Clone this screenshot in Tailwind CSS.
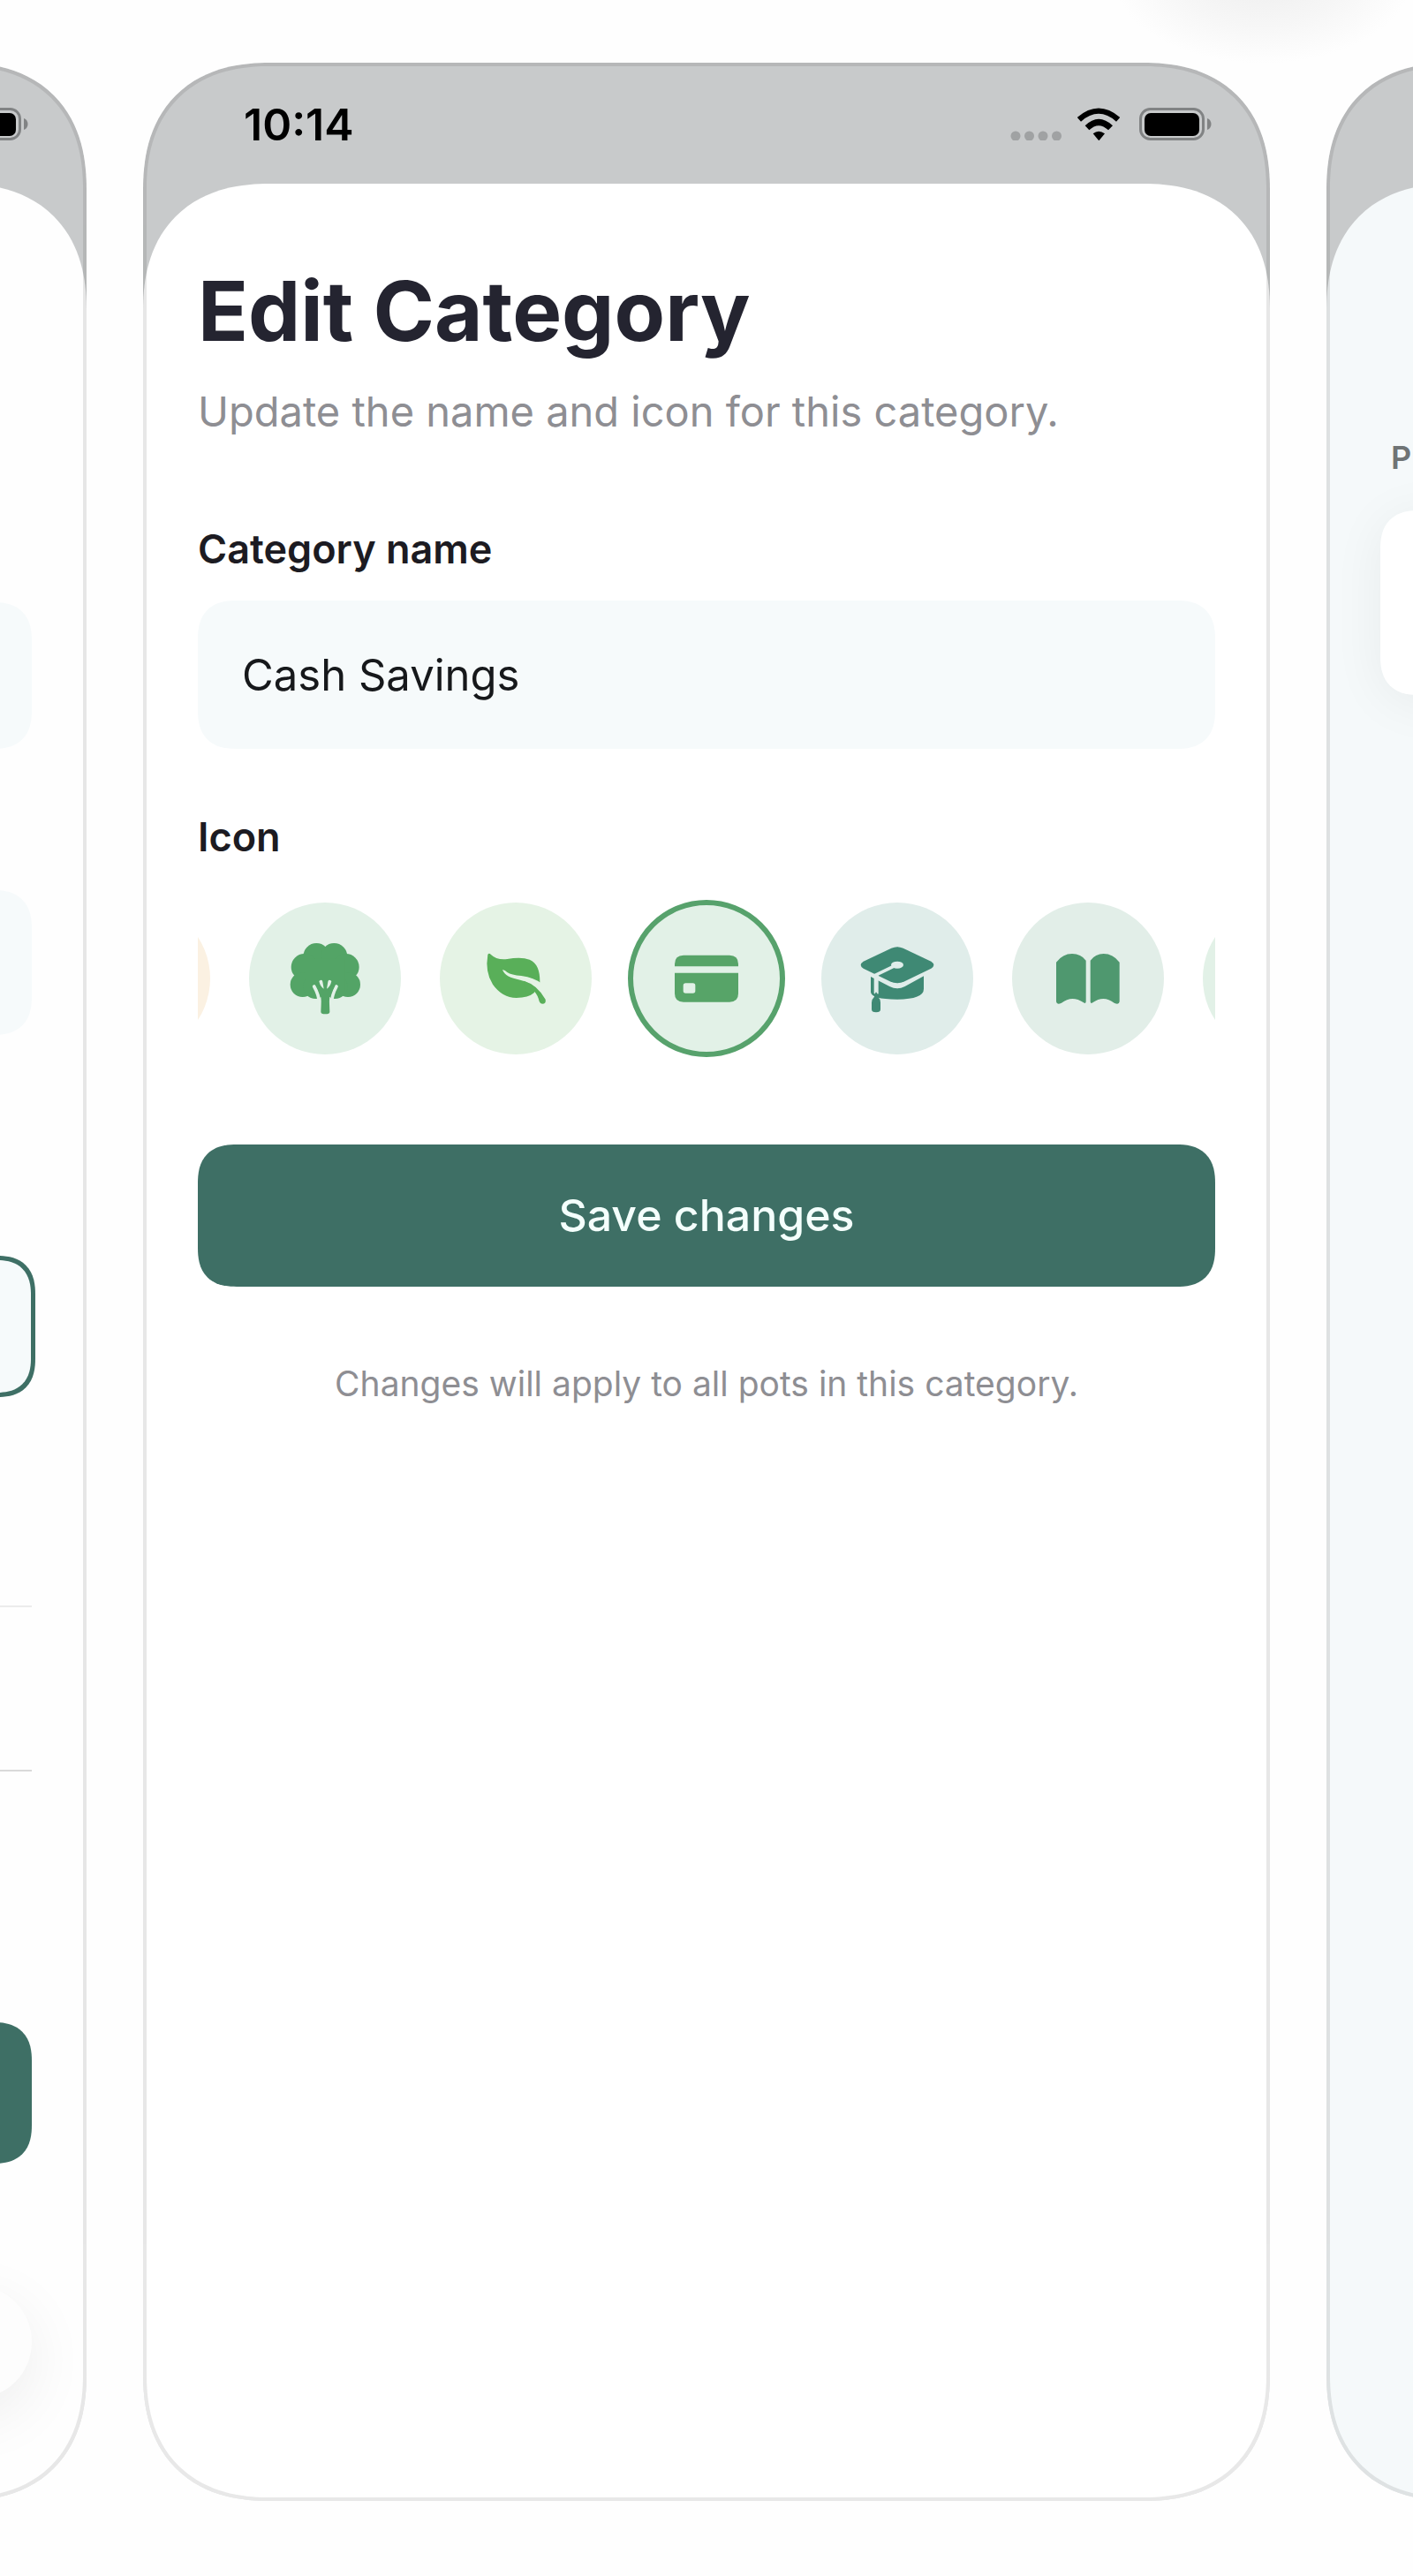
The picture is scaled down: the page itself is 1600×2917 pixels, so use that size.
<!DOCTYPE html>
<html lang="en">
<head>
    <meta charset="UTF-8">
    <meta name="viewport" content="width=device-width, initial-scale=1.0">
    <title>Edit Category</title>
    <script src="https://cdn.jsdelivr.net/npm/@tailwindcss/browser@4"></script>
    <style>
        body {
            font-family: 'Inter', sans-serif;
        }
        .phone, .phone-sheet, .phone-edge {
            border-radius: 116px;
        }
        .phone-sheet {
            border-bottom-left-radius: 0;
            border-bottom-right-radius: 0;
        }
        .smooth {
            border-radius: 36px;
        }
        /* continuous corners where the browser has them */
        @supports (corner-shape: superellipse(1.3)) {
            .phone, .phone-sheet, .phone-edge {
                border-radius: 144px;
                corner-shape: superellipse(1.22);
            }
            .phone-sheet {
                border-bottom-left-radius: 0;
                border-bottom-right-radius: 0;
            }
            .smooth {
                border-radius: 44px;
                corner-shape: superellipse(1.3);
            }
        }
    </style>
</head>
<body class="bg-[#fefefe] min-h-screen overflow-x-hidden">
    <main class="relative grid grid-cols-[98px_minmax(0,1fr)_98px] gap-16 pt-[71px] pb-[85px] min-h-screen overflow-hidden">

        <!-- Shadow of the row above -->
        <div class="absolute -top-32 right-0 w-[340px] h-50 bg-[radial-gradient(closest-side,#eeeeee,#f6f6f6_55%,#fefefe)]"></div>

        <!-- Previous screen -->
        <div class="relative flex justify-end overflow-hidden">
            <section class="phone relative shrink-0 w-[640px] bg-[#c8cacb] overflow-hidden flex flex-col">
                <div class="flex items-center justify-end h-[137px] pt-0.5 px-[66px]">
                    <svg class="w-[82px] h-[37px]" viewBox="0 0 82 37" aria-hidden="true">
                        <rect x="1.5" y="1.5" width="71" height="34" rx="11" fill="none" stroke="#818384" stroke-width="3"/>
                        <rect x="6" y="6" width="62" height="26" rx="7" fill="#000"/>
                        <path d="M77 12c6 2 6 11 0 13z" fill="#818384"/>
                    </svg>
                </div>
                <div class="phone-sheet flex-1 flex flex-col bg-[#fefefe] px-[62px] pt-[474px]">
                    <input type="text" aria-label="Pot name" class="smooth w-full h-[166px] bg-[#f6fafb]">
                    <input type="text" aria-label="Pot amount" class="smooth w-full h-[164px] mt-40 bg-[#f6fafb]">
                    <button type="button" aria-label="Pot category" class="smooth h-40 mt-[250px] -mx-1 bg-[#f6fafb] border-5 border-[#3e6f65]"></button>
                    <hr class="mt-[236px] border-t-2 border-[#ececec]">
                    <hr class="mt-46 border-t-2 border-[#d9d9d9]">
                    <button type="button" aria-label="Save" class="smooth h-40 mt-[284px] bg-[#3e6f65]"></button>
                    <button type="button" aria-label="Close" class="self-end size-32 mt-[138px] rounded-full bg-[#fdfdfd] shadow-[0_20px_70px_rgba(0,0,0,0.07)]"></button>
                </div>
                <div class="phone-edge absolute inset-0 border-4 border-black/9 pointer-events-none"></div>
            </section>
        </div>

        <!-- Edit category -->
        <section class="phone relative bg-[#c8cacb] overflow-hidden flex flex-col">
            <header class="flex items-center justify-between h-[137px] pt-0.5 pl-[114px] pr-[66px]">
                <time class="text-[50px] leading-[56px] font-semibold text-black">10:14</time>
                <div class="flex items-center">
                    <svg class="w-[58px] h-[37px] mr-[18px]" viewBox="0 0 58 37" fill="#a0a2a3" aria-hidden="true">
                        <circle cx="6" cy="32" r="5.5"/>
                        <circle cx="21.5" cy="32" r="5.5"/>
                        <circle cx="37" cy="32" r="5.5"/>
                        <circle cx="52.5" cy="32" r="5.5"/>
                    </svg>
                    <svg class="w-12 h-[37px] mr-[22px]" viewBox="366 366 144 111" aria-hidden="true">
                        <path d="M365 399Q438 336 511 399L498 413Q438 360 378 413Z"/>
                        <path d="M392 427Q438 382 486 427L471 442Q438 411 406 442Z"/>
                        <path d="M419 454Q438 438 459 454L439 478Z"/>
                    </svg>
                    <svg class="w-[82px] h-[37px]" viewBox="0 0 82 37" aria-hidden="true">
                        <rect x="1.5" y="1.5" width="71" height="34" rx="11" fill="none" stroke="#818384" stroke-width="3"/>
                        <rect x="6" y="6" width="62" height="26" rx="7" fill="#000"/>
                        <path d="M77 12c6 2 6 11 0 13z" fill="#818384"/>
                    </svg>
                </div>
            </header>

            <form class="phone-sheet flex-1 flex flex-col bg-white px-[62px] pt-22">
                <h1 class="text-[94px] leading-[112px] font-bold text-[#242430]">Edit Category</h1>
                <p class="mt-[26px] text-[47px] leading-[64px] text-[#8e8e93]">Update the name and icon for this category.</p>

                <label for="name" class="mt-24 text-[45px] leading-[56px] font-semibold text-[#1c1b22]">Category name</label>
                <input id="name" type="text" value="Cash Savings" class="smooth w-full h-[168px] mt-[30px] px-[50px] bg-[#f6fafb] text-[49px] text-[#16181b]">

                <fieldset class="min-w-0 mt-18">
                    <legend class="text-[45px] leading-[56px] font-semibold text-[#1c1b22]">Icon</legend>
                    <div class="flex justify-center gap-11 mt-[42px] py-1 overflow-hidden">
                        <label class="relative shrink-0 size-43 rounded-full bg-[#fbf1e2]">
                            <input type="radio" name="icon" aria-label="Sun" class="sr-only">
                        </label>
                        <label class="relative shrink-0 size-43 rounded-full bg-[#e2f1e7]">
                            <input type="radio" name="icon" aria-label="Tree" class="sr-only">
                            <svg viewBox="248 369 516 516" fill="#53a466" aria-hidden="true">
                                <circle cx="477" cy="552" r="45"/>
                                <circle cx="537" cy="552" r="45"/>
                                <circle cx="436" cy="588" r="45"/>
                                <circle cx="577" cy="588" r="45"/>
                                <circle cx="430" cy="648" r="42"/>
                                <circle cx="584" cy="648" r="42"/>
                                <circle cx="474" cy="654" r="42"/>
                                <circle cx="540" cy="654" r="42"/>
                                <path d="M440 560h134v110H440z"/>
                                <path d="M490 690h34v20h-34z" fill="#e2f1e7"/>
                                <path d="M469 654Q486 684 487 712M545 654Q529 684 528 712" fill="none" stroke="#e2f1e7" stroke-width="11" stroke-linecap="round"/>
                                <path d="M478 654l8-4 16 18h12l16-18 8 4-14 30q-4 10-3 30l1 26q0 8-15 8t-15-8l1-26q1-20-3-30z"/>
                                <path d="M486 636q10-8 12 2l4 24q-12-6-16-26zM528 636q-10-8-12 2l-4 24q12-6 16-26z" fill="#e2f1e7"/>
                            </svg>
                        </label>
                        <label class="relative shrink-0 size-43 rounded-full bg-[#e5f3e5]">
                            <input type="radio" name="icon" aria-label="Leaf" class="sr-only">
                            <svg viewBox="895 369 516 516" fill="#59af59" aria-hidden="true">
                                <path d="M1058 546Q1062 539 1068 545Q1088 565 1124 561Q1172 552 1200 563Q1236 578 1235 640L1215 676Q1196 693 1155 693Q1107 692 1075 647Q1048 606 1058 546Z"/>
                                <path d="M1108 598Q1114 596 1124 606Q1138 615 1172 618Q1216 624 1240 644L1262 672L1236 672Q1204 640 1168 632Q1118 624 1108 598Z" fill="#e5f3e5"/>
                                <path d="M1180 635Q1226 648 1254 698Q1257 713 1243 713Q1236 713 1233 705Q1228 684 1217 672L1190 684Z"/>
                            </svg>
                        </label>
                        <label class="relative shrink-0 size-43 rounded-full bg-[#e2f1e7] outline-6 -outline-offset-3 outline-[#57a26c]">
                            <input type="radio" name="icon" aria-label="Card" class="sr-only" checked>
                            <svg viewBox="102 70 516 516" fill="#57a468" aria-hidden="true">
                                <path d="M252 287v-8q0-30 30-30h156q30 0 30 30v8z"/>
                                <path d="M252 309h216v70q0 29-30 29H282q-30 0-30-29z"/>
                                <rect x="281" y="344" width="41" height="34" rx="8" fill="#e2f1e7"/>
                            </svg>
                        </label>
                        <label class="relative shrink-0 size-43 rounded-full bg-[#e0edea]">
                            <input type="radio" name="icon" aria-label="Graduation cap" class="sr-only">
                            <svg viewBox="749 68 516 516" fill="#3f8974" aria-hidden="true">
                                <path d="M917 320v50q-2 27 90 27t90-37v-42l-64 35q-26 14-52 0z"/>
                                <path d="M892 268L987 223Q1007 214 1027 223L1122 268Q1140 280 1122 292L1032 336Q1007 348 982 336L892 292Q874 280 892 268Z"/>
                                <path d="M926 318L994 285" fill="none" stroke="#e0edea" stroke-width="11"/>
                                <ellipse cx="1007" cy="280" rx="21" ry="12" fill="#e0edea"/>
                                <path d="M928 314h15v64l-8 4-7-6z" fill="#e0edea"/>
                                <path d="M935 372q-6 6-6 16-9 8-9 20v23q0 10 15 10t15-10v-23q0-12-8-20 0-10-7-16z"/>
                            </svg>
                        </label>
                        <label class="relative shrink-0 size-43 rounded-full bg-[#e2eee8]">
                            <input type="radio" name="icon" aria-label="Book" class="sr-only">
                            <svg viewBox="196 69 516 516" fill="#4f986f" aria-hidden="true">
                                <path d="M346 272Q368 243 400 243Q430 243 447 266V406Q446 414 439 409Q400 382 364 410Q348 418 346 406Z"/>
                                <path d="M561 272Q539 243 507 243Q479 243 462 266V406Q463 414 470 409Q507 382 543 410Q559 418 561 406Z"/>
                            </svg>
                        </label>
                        <label class="relative shrink-0 size-43 rounded-full bg-[#e2f1e7]">
                            <input type="radio" name="icon" aria-label="Gift" class="sr-only">
                        </label>
                    </div>
                </fieldset>

                <button type="submit" class="smooth w-full h-[161px] mt-[98px] bg-[#3e6f65] text-[50px] font-medium text-[#f4fffc]">Save changes</button>
                <p class="mt-[86px] text-center text-[39px] leading-[48px] text-[#8e8e93]">Changes will apply to all pots in this category.</p>
            </form>
            <div class="phone-edge absolute inset-0 border-4 border-black/9 pointer-events-none"></div>
        </section>

        <!-- Next screen -->
        <div class="relative flex overflow-hidden">
            <section class="phone relative shrink-0 w-[640px] bg-[#c8cacb] overflow-hidden flex flex-col pt-[137px]">
                <div class="phone-sheet flex-1 bg-[#f5f9fa] px-[61px] pt-[286px]">
                    <h2 class="ml-3 text-[36px] leading-[48px] font-semibold text-[#6f7475]">P</h2>
                    <div class="smooth h-[209px] mt-9 bg-white shadow-[0_8px_60px_rgba(0,0,0,0.06)]"></div>
                </div>
                <div class="phone-edge absolute inset-0 border-4 border-black/9 pointer-events-none"></div>
            </section>
        </div>
    </main>
</body>
</html>
